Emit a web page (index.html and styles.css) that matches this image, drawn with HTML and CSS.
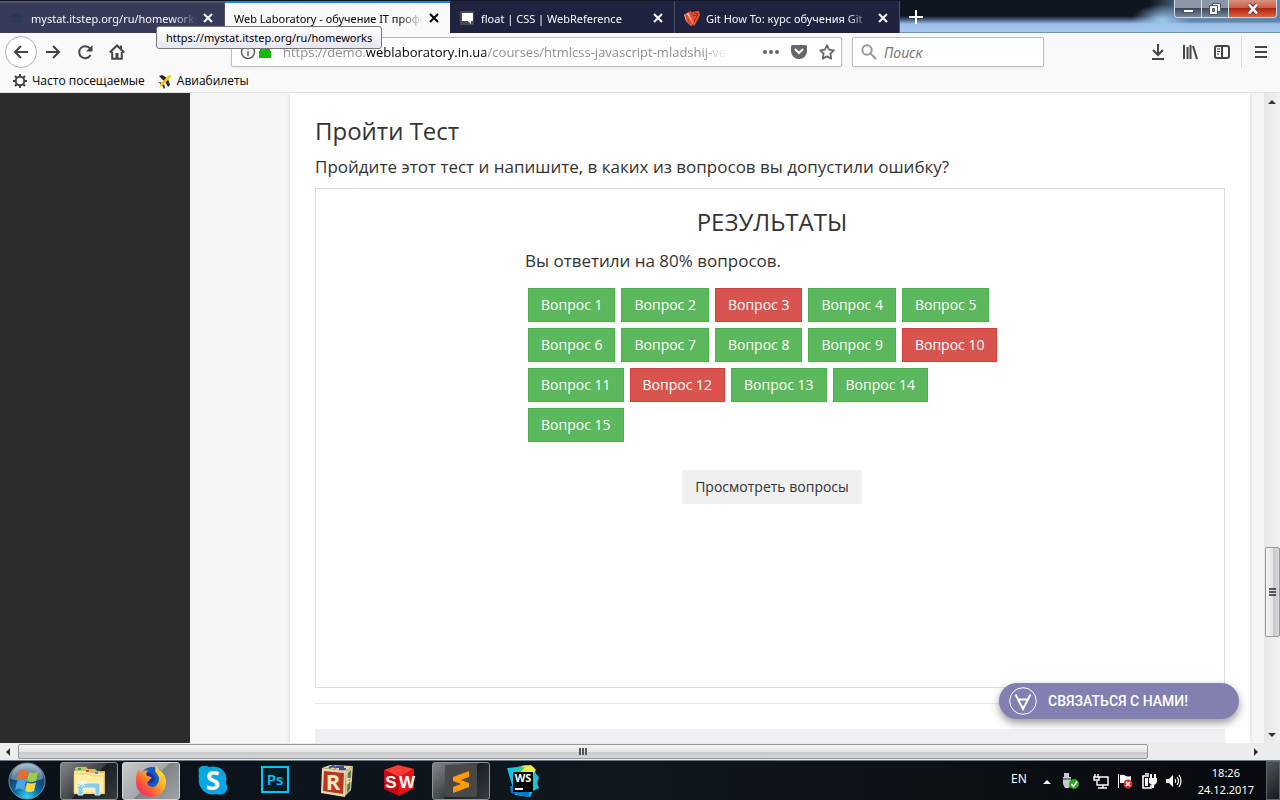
FILE: index.html
```html
<!DOCTYPE html>
<html lang="ru">
<head>
<meta charset="utf-8">
<title>Web Laboratory - обучение IT профессиям</title>
<link rel="stylesheet" href="styles.css">
</head>
<body>
<header class="browser">
  <div class="tabstrip">
    <div class="tab hovered">
      <svg class="fav" viewBox="0 0 16 16"><path fill="#25395a" d="M1 6l7-3 7 3-7 3zM4 8.5l4 2 4-2V12c-2 2-6 2-8 0zM1.500 7h1v5h-1z"/></svg>
      <span class="tab-title">mystat.itstep.org/ru/homeworks</span>
      <button class="close" aria-label="Закрыть вкладку"><svg viewBox="0 0 10 10"><path d="M1 1l8 8M9 1L1 9"/></svg></button>
    </div>
    <div class="tab active">
      <span class="tab-title">Web Laboratory - обучение IT профессиям</span>
      <button class="close" aria-label="Закрыть вкладку"><svg viewBox="0 0 10 10"><path d="M1 1l8 8M9 1L1 9"/></svg></button>
    </div>
    <div class="tab">
      <svg class="fav" viewBox="0 0 16 16"><rect x="1" y="1" width="14" height="14" rx="1" fill="#4b4b4b"/><path fill="#fff" d="M3 3h11v8h-2v3l-3-3H3z"/></svg>
      <span class="tab-title">float | CSS | WebReference</span>
      <button class="close" aria-label="Закрыть вкладку"><svg viewBox="0 0 10 10"><path d="M1 1l8 8M9 1L1 9"/></svg></button>
    </div>
    <div class="tab">
      <svg class="fav" viewBox="0 0 16 16"><path fill="#ffb9a4" d="M0 5l5-3 6 10-4 4-5-5z"/><path fill="#e5482b" d="M1 5l2-1 6 10-2 2-4-4z"/><path fill="#e5482b" d="M4 2l3-1 5 11-2 2z"/><path fill="#f0502c" d="M8 2l7-1 1 4-5 10-2 1 1-6z"/><path stroke="#8e2413" stroke-width=".9" fill="none" d="M10 3l4 1-4 8M9 5l4 1"/></svg>
      <span class="tab-title">Git How To: курс обучения Git</span>
      <button class="close" aria-label="Закрыть вкладку"><svg viewBox="0 0 10 10"><path d="M1 1l8 8M9 1L1 9"/></svg></button>
    </div>
    <button class="newtab" aria-label="Новая вкладка"><svg viewBox="0 0 14 14"><path d="M7 0v14M0 7h14"/></svg></button>
    <div class="caption">
      <button aria-label="Свернуть"><svg viewBox="0 0 16 12"><rect x="3.500" y="6.500" width="10" height="3" fill="#fff" stroke="#4d5563"/></svg></button>
      <button aria-label="Восстановить"><svg viewBox="0 0 16 12"><path fill="#fff" stroke="#4d5563" d="M5.500.500h8v8h-8z"/><path fill="#fff" stroke="#4d5563" d="M2.500 2.500h8v9h-8z"/><path fill="#7d8795" stroke="#4d5563" d="M5.500 5.500h2v3h-2z"/></svg></button>
      <button class="x" aria-label="Закрыть"><svg viewBox="0 0 16 12"><path stroke="#5a4550" stroke-width="4.500" d="M4 1.500l8 9M12 1.500l-8 9"/><path stroke="#fff" stroke-width="2.600" d="M4 1.500l8 9M12 1.500l-8 9"/></svg></button>
    </div>
  </div>

  <div class="toolbar">
    <button class="tool back" aria-label="Назад"><svg viewBox="0 0 16 16"><path d="M15 8H2M8 2L2 8l6 6"/></svg></button>
    <button class="tool" aria-label="Вперёд"><svg viewBox="0 0 16 16"><path d="M1 8h13M8 2l6 6-6 6"/></svg></button>
    <button class="tool" aria-label="Обновить"><svg viewBox="0 0 16 16"><path d="M13 4.500A6 6 0 1 0 13.500 11"/><path class="solid" d="M15.500 1v6.500H9z"/></svg></button>
    <button class="tool" aria-label="Домой"><svg viewBox="0 0 16 16"><path d="M.8 8.500L8 1.500l7.200 7M3.200 8v6.800h9.600V8"/><path class="solid" d="M6.500 9h3v6h-3zM11 1.500h2V6l-2-2z"/></svg></button>
    <div class="urlbar">
      <svg class="info" viewBox="0 0 16 16"><circle cx="8" cy="8" r="6.500"/><path d="M8 7v5M8 4v1.600"/></svg>
      <svg class="lock" viewBox="0 0 14 14"><path d="M1 6h1V4a3 3 0 0 1 10 0v2h1v7H1z"/></svg>
      <input class="url" type="text" aria-label="Адрес" value="https://demo.weblaboratory.in.ua/courses/htmlcss-javascript-mladshij-verstalshik">
      <button class="mini" aria-label="Действия"><svg viewBox="0 0 16 16"><circle cx="2" cy="8" r="2"/><circle cx="8" cy="8" r="2"/><circle cx="14" cy="8" r="2"/></svg></button>
      <button class="mini" aria-label="Pocket"><svg viewBox="0 0 16 16"><path d="M1.500 1h13Q16 1 16 2.500V7A8 8 0 0 1 0 7V2.500Q0 1 1.500 1z"/><path fill="none" stroke="#fff" stroke-width="2" stroke-linecap="round" d="M4.500 5.500L8 9l3.500-3.500"/></svg></button>
      <button class="mini" aria-label="Добавить закладку"><svg viewBox="0 0 16 16"><path fill="none" stroke="#666" stroke-width="1.800" stroke-linejoin="round" d="M8 1.300l2.100 4.400 4.700.6-3.400 3.400.8 4.900L8 12.300l-4.200 2.300.8-4.900L1.200 6.300l4.700-.6z"/></svg></button>
    </div>
    <div class="searchbar">
      <svg viewBox="0 0 16 16"><circle cx="6" cy="6" r="4.700"/><path d="M9.500 9.500L15 15"/></svg>
      <input type="text" placeholder="Поиск" aria-label="Поиск">
    </div>
    <div class="actions">
      <button class="tool" aria-label="Загрузки"><svg viewBox="0 0 16 16"><path d="M8 0v11M3 6l5 5 5-5M2 15h12"/></svg></button>
      <button class="tool" aria-label="Библиотека"><svg viewBox="0 0 16 16"><path d="M2 1v14M5.500 3v12M8.500 1v14M11 2l4 13"/></svg></button>
      <button class="tool" aria-label="Боковая панель"><svg viewBox="0 0 16 16"><rect x="1" y="2" width="14" height="12" rx="2"/><path d="M8 2v12"/><path class="thin" d="M3 5h3M3 7.500h3M3 10h2"/></svg></button>
      <button class="tool menu" aria-label="Меню"><svg viewBox="0 0 16 16"><path d="M2 3h12M2 8h12M2 13h12"/></svg></button>
    </div>
  </div>

  <nav class="bookmarks">
    <a href="#"><svg viewBox="0 0 16 16"><circle cx="8" cy="8" r="4.300" fill="none" stroke="#444" stroke-width="2"/><path stroke="#444" stroke-width="2" d="M8 1v3M8 12v3M1 8h3M12 8h3M3 3l2 2M11 11l2 2M13 3l-2 2M5 11l-2 2"/></svg>Часто посещаемые</a>
    <a href="#"><svg viewBox="0 0 16 16"><path fill="#222" d="M2 3l3-1 5 3-3 3zM11 6l2 6-2 2-3-6zM1 9l5 1-1 2zM5 12l2-1 1 4-1 1z"/><path fill="#f6c800" d="M11 3l3-1v2l-8 8-4 3 2-5z"/></svg>Авиабилеты</a>
  </nav>
  <div class="tooltip" role="tooltip">https://mystat.itstep.org/ru/homeworks</div>
</header>

<div class="viewport">
  <aside class="side"></aside>
  <div class="page">
    <main class="content">
      <h1>Пройти Тест</h1>
      <p>Пройдите этот тест и напишите, в каких из вопросов вы допустили ошибку?</p>
      <section class="quiz">
        <div class="results">
          <h2>РЕЗУЛЬТАТЫ</h2>
          <p>Вы ответили на 80% вопросов.</p>
          <div class="questions">
            <button>Вопрос 1</button><button>Вопрос 2</button><button class="wrong">Вопрос 3</button><button>Вопрос 4</button><button>Вопрос 5</button>
            <button>Вопрос 6</button><button>Вопрос 7</button><button>Вопрос 8</button><button>Вопрос 9</button><button class="wrong">Вопрос 10</button>
            <button>Вопрос 11</button><button class="wrong">Вопрос 12</button><button>Вопрос 13</button><button>Вопрос 14</button>
            <button>Вопрос 15</button>
          </div>
          <button class="review">Просмотреть вопросы</button>
        </div>
      </section>
      <hr>
      <div class="panel"></div>
    </main>
  </div>
  <div class="vscroll">
    <i class="arrow up"></i><div class="vthumb"><i></i><i></i><i></i></div><i class="arrow down"></i>
  </div>
  <button class="contact"><svg viewBox="0 0 28 28"><circle cx="14" cy="14" r="13.300"/><path class="a" d="M6.500 7.500L14 22l7.500-14.500M9 12.500h10"/></svg>СВЯЗАТЬСЯ С НАМИ!</button>
</div>
<div class="hscroll"><i class="arrow left"></i><div class="htrack"><div class="hthumb"><i></i><i></i><i></i></div></div><i class="arrow right"></i></div>

<footer class="taskbar">
  <button class="start" aria-label="Пуск">
    <svg viewBox="0 0 38 38"><defs><radialGradient id="orb" cx=".5" cy=".95" r=".9"><stop offset="0" stop-color="#35d5f5"/><stop offset=".4" stop-color="#0869a5"/><stop offset=".75" stop-color="#173f68"/><stop offset="1" stop-color="#8aa7bd"/></radialGradient></defs><circle cx="19" cy="19" r="18" fill="url(#orb)" stroke="#6c96ad"/><path fill="#c8d7e2" opacity=".45" d="M3 17a16 15 0 0 1 32 0q-16 5-32 0z"/><path fill="#ee6b2d" d="M11 9q4-3 9 0l-2 9q-4-3-9 0z"/><path fill="#9bcc43" d="M21 10q4 2 9 0l-2 9q-4 2-9 0z"/><path fill="#4aa6e3" d="M9 19.500q4-3 9 0l-2 8.500q-4-3-9 0z"/><path fill="#ffd43a" d="M19 20.500q4 2 9 0L26 29q-4 2-9 0z"/></svg>
  </button>
  <button class="task open" aria-label="Проводник">
    <svg viewBox="0 0 32 32"><path fill="#d9bc62" d="M2 3l2-1h9l2 2h7l2 2h8v23H1z"/><path fill="#f7e6a0" d="M1 6h14l2 2h14v21H1z"/><path fill="#ffef9f" stroke="#d6b85f" stroke-width=".6" d="M1 9h15l2 2h13v17H1z"/><path fill="#25a538" d="M5 3h3v2H5z"/><path fill="#d84b38" d="M13 5h3v2h-3z"/><path fill="#2f9be0" d="M22 7h3v2h-3z"/><path fill="#8bc9e8" stroke="#d6f2ff" d="M5 30V20q0-2 2-2h18q2 0 2 2v10h-5v-7H10v7z"/><path stroke="#fff" d="M9 13v9M5 18h9M6 15l6 6M12 15l-6 6"/></svg>
  </button>
  <button class="task open current" aria-label="Firefox">
    <svg viewBox="0 0 32 32"><defs><linearGradient id="fox" x1="1" y1="0" x2="0" y2="1"><stop offset="0" stop-color="#fff34a"/><stop offset=".4" stop-color="#ffae22"/><stop offset=".7" stop-color="#ff4f3d"/><stop offset="1" stop-color="#e31587"/></linearGradient></defs><circle cx="17" cy="14" r="12" fill="#1459c9"/><path fill="#173393" d="M11 7q7 0 9 7-1 5-7 4z"/><path fill="url(#fox)" d="M3 5q2 0 3 3 4-4 7-2-3 2-1 5 3 0 5 2-3 1-3 3-3 1-1 4 4 4 9 0 4-6 0-11-3-3-1-8 3 4 6 6 4 5 4 10A15 15 0 0 1 1 17Q1 10 3 5z"/></svg>
  </button>
  <button class="task" aria-label="Skype">
    <svg viewBox="0 0 32 32"><path fill="#08a6e2" d="M2 8Q0 3 5 1q4-1 7 1Q23 0 28 8q2 4 1 10 3 6-1 10-4 3-9 1-10 2-15-6-3-5-2-9-1-3 0-6z"/><text class="skype" x="16" y="25" text-anchor="middle">S</text></svg>
  </button>
  <button class="task" aria-label="Photoshop">
    <svg viewBox="0 0 32 32"><rect x="3" y="2" width="26" height="25" fill="#001d26" stroke="#00c8ff" stroke-width="2"/><text class="ps" x="16" y="20" text-anchor="middle">Ps</text></svg>
  </button>
  <button class="task" aria-label="R">
    <svg viewBox="0 0 32 32"><path fill="#e6d6a6" d="M1 3l8-3 23 1-7 5z"/><path stroke="#394b92" stroke-width="2" fill="none" d="M8 3l4-2 3 2M15 2h8M18 4h7"/><path fill="#d9c68e" d="M25 6l7-5-2 24-6 6z"/><path fill="#4c7b4b" d="M27 8l3-3-1 19-3 4z"/><path fill="#ead9aa" d="M1 3l24 3-1 26L0 28z"/><path fill="#b93528" d="M3 6l20 2-1 21L2 26z"/><text class="block" x="12" y="25" text-anchor="middle">R</text><text class="side-letter" x="28" y="19" text-anchor="middle">P</text></svg>
  </button>
  <button class="task" aria-label="SolidWorks">
    <svg viewBox="0 0 32 32"><path fill="#ff3b32" d="M1 5l14-5 16 4-15 8z"/><path fill="#c80b11" d="M1 5l15 7v19L1 24z"/><path fill="#e3161a" d="M31 4l-15 8v19l15-8z"/><text class="sw" x="8" y="23" text-anchor="middle">S</text><text class="sw" x="24" y="23" text-anchor="middle">W</text></svg>
  </button>
  <button class="task open" aria-label="Sublime Text">
    <svg viewBox="0 0 32 32"><rect width="32" height="32" rx="2" fill="#484848"/><path fill="#ff9b00" d="M8 12l16-6v6l-8 3 8 3v4L8 28v-6l8-3-8-3z"/></svg>
  </button>
  <button class="task" aria-label="WebStorm">
    <svg viewBox="0 0 32 32"><path fill="#16c4dc" d="M0 3l10-1 8-2 9 2 2 7 3 3-2 6 2 5-6 3-3 6-15-2z"/><path fill="#efe94a" d="M15 1l9-1 5 5-4 5-12-2z"/><path fill="#0878d8" d="M3 21h20l-1 11-18-4z"/><path fill="#25d49a" d="M8 3l10-1-8 9z"/><path fill="#000" d="M6 7h20v20H6z"/><text class="ws" x="16" y="17" text-anchor="middle">WS</text><path fill="#fff" d="M8 23h8v2H8z"/></svg>
  </button>
  <div class="tray">
    <span class="lang">EN</span>
    <svg viewBox="0 0 16 16"><path fill="#fff" d="M4 11l4-4 4 4z"/></svg>
    <svg class="usb" viewBox="0 0 16 16"><path fill="#c4c8cc" d="M1 0h5v4h2v7l-2 4H2l-2-4V4h1z"/><path fill="#777d82" d="M0 5h8v2H0z"/><circle cx="11" cy="11" r="5" fill="#2aa51e"/><path fill="none" stroke="#fff" stroke-width="1.600" d="M8.500 11l2 2.500L14 8.500"/></svg>
    <svg viewBox="0 0 16 16"><path fill="none" stroke="#fff" stroke-width="1.400" d="M6 4h9v8H4V8M10 12v3M5 15h9M2 1v3M5 1v3M1 4h5v3H1z"/></svg>
    <svg viewBox="0 0 16 16"><path fill="#fff" d="M1 1h1v14H1zM3 2q3-1 6 1 2 1 5 0v7H3z"/><circle cx="11" cy="11" r="4.500" fill="#e02a22"/><path stroke="#fff" stroke-width="1.700" d="M9 9l4 4M13 9l-4 4"/></svg>
    <svg viewBox="0 0 16 16"><path fill="none" stroke="#fff" stroke-width="1.600" d="M8 3H2v12h8v-3M4 1h4"/><path fill="#fff" d="M4 5h3v8H4zM8 5h8v4q-1 3-4 3T8 9zM9 1h2v4H9zM13 1h2v4h-2zM11 12h2v3h-2z"/></svg>
    <svg viewBox="0 0 16 16"><path fill="#fff" d="M1 6h3l4-4v12l-4-4H1z"/><path fill="none" stroke="#fff" stroke-width="1.200" d="M10 6q1.500 2 0 4M12 4q3 4 0 8M14 2q4 6 0 12"/></svg>
    <time>18:26<br>24.12.2017</time>
    <button class="desktop" aria-label="Свернуть все окна"></button>
  </div>
</footer>
</body>
</html>
```
FILE: styles.css
```css
* { box-sizing: border-box; }
body {
  margin: 0;
  height: 100vh;
  display: flex;
  flex-direction: column;
  overflow: hidden;
  font-family: "Open Sans", "Noto Sans", sans-serif;
  color: #333;
}
button { font: inherit; color: inherit; border: 0; padding: 0; background: none; flex: none; }
input { font: inherit; border: 0; padding: 0; min-width: 0; outline: 0; background: none; }
svg { display: block; flex: none; overflow: visible; }

.browser { position: relative; flex: none; background: #f9f9fa; font-family: "Noto Sans", sans-serif; font-size: 11px; color: #000; }
.tabstrip {
  display: flex;
  height: 33px;
  padding-top: 1px;
  border-bottom: 1px solid #6f93bd;
  background:
    radial-gradient(ellipse 30px 16px at 1162px 20px, #9cc9ee, transparent),
    linear-gradient(90deg, transparent 1150px, #5f87ad 1190px),
    linear-gradient(#10161f 0 16px, #4b6486 20px, #9dbfe8 24px, #a9cbf2 33px);
  background-size: auto, 100% 22px, auto;
  background-repeat: no-repeat;
}
.tab { display: flex; align-items: center; flex: 0 1 225px; min-width: 0; height: 32px; padding: 2px 11px 0 9px; gap: 6px; background: #202340; color: #f9f9fa; border-right: 1px solid #4d4f66; }
.tab.hovered { background: #383a59; border-top: 2px solid #55566f; padding-top: 0; }
.tab.active { background: #f9f9fa; color: #000; border-top: 2px solid #0a84ff; border-right: 0; padding-top: 0; }
.fav { width: 16px; height: 16px; }
.tab-title { flex: 1; overflow: hidden; white-space: nowrap; mask-image: linear-gradient(90deg, #000 calc(100% - 24px), transparent); }
.close svg { width: 10px; height: 10px; stroke: currentColor; stroke-width: 2; }
.newtab { width: 32px; display: grid; place-items: center; }
.newtab svg { width: 14px; height: 14px; stroke: #fff; stroke-width: 2; }
.caption { margin: -1px 3px 0 auto; display: flex; height: 18px; border: 1px solid #d5dce4; border-top: 0; border-radius: 0 0 4px 4px; overflow: hidden; flex: none; }
.caption button { width: 27px; display: grid; place-items: center; border-right: 1px solid #d5dce4; background: linear-gradient(#8b97a6 0 50%, #3d4a5c 50%, #76869b); }
.caption svg { width: 16px; height: 12px; }
.caption .x { width: 47px; border: 0; background: linear-gradient(#dc9080, #c75a44 50%, #b02410 50%, #e0603c); }

.toolbar { display: flex; align-items: center; height: 38px; padding: 0 1px 0 5px; }
.tool { width: 32px; height: 32px; display: grid; place-items: center; }
.tool svg { width: 16px; height: 16px; fill: none; stroke: #444; stroke-width: 2; }
.tool .solid { fill: #444; stroke: none; }
.tool .thin { stroke-width: 1; }
.tool.back { border: 1px solid #b1b1b3; border-radius: 50%; background: #fff; }
.urlbar, .searchbar { display: flex; align-items: center; height: 30px; border: 1px solid #bdbdbe; border-radius: 2px; background: #fff; box-shadow: 0 1px 3px #0001; }
.urlbar { flex: 1 1 611px; margin-left: 98px; padding: 0 0 0 8px; min-width: 0; }
.info { width: 16px; height: 16px; fill: none; stroke: #666; stroke-width: 1.5; margin-right: 2px; }
.lock { width: 14px; height: 14px; fill: #12bc00; margin-right: 11px; }
.url {
  flex: 1;
  font-family: "Open Sans", sans-serif;
  font-size: 13px;
  color: transparent;
  background: linear-gradient(90deg, #888 83px, #000 83px 203px, #888 203px 420px, transparent 444px);
  background-clip: text;
  -webkit-background-clip: text;
}
.mini { width: 28px; display: grid; place-items: center; }
.mini svg { width: 16px; height: 16px; fill: #666; }
.searchbar { flex: 0 1 192px; margin-left: 10px; padding: 0 8px; gap: 7px; min-width: 0; }
.searchbar svg { width: 16px; height: 16px; fill: none; stroke: #999; stroke-width: 2; }
.searchbar input { flex: 1; width: 100%; font-size: 14px; font-style: italic; }
.searchbar input::placeholder { color: #777; }
.actions { display: flex; margin-left: 98px; }
.tool.menu { width: 38px; border-left: 1px solid #dcdcdc; margin-left: 3px; }
.bookmarks { display: flex; align-items: center; gap: 12px; height: 22px; padding: 0 12px 2px; border-bottom: 1px solid #e0e0e1; font-family: "Open Sans", sans-serif; font-size: 12px; }
.bookmarks a { display: flex; align-items: center; gap: 4px; color: #000; text-decoration: none; }
.bookmarks svg { width: 16px; height: 16px; }
.tooltip { position: absolute; left: 156px; top: 26px; height: 23px; padding: 0 9px; line-height: 21px; border: 1px solid #767676; border-radius: 3px; background: linear-gradient(#fff, #e4e5f0); white-space: nowrap; }

.viewport { position: relative; flex: 1; min-height: 0; display: flex; overflow: hidden; }
.side { flex: 0 0 190px; background: #2c2c2c; }
.page { flex: 1; min-width: 0; padding: 0 14px 0 100px; background: #f6f6f6; overflow: hidden; }
.content { display: flex; flex-direction: column; min-height: 100%; padding: 22px 25px 0; background: #fff; box-shadow: 0 0 5px #0002; }
h1, h2 { margin: 0; font-size: 24px; line-height: 32px; font-weight: 400; }
p { margin: 8px 0; font-size: 17px; line-height: 24px; }
.quiz { min-height: 500px; border: 1px solid #ddd; padding: 17px 0 0 4px; }
.content > p { margin-bottom: 9px; }
.results { width: 494px; max-width: 100%; margin: 0 auto; display: flex; flex-direction: column; }
.results h2 { text-align: center; }
.results p { margin: 11px 0 12px; }
.questions { display: flex; flex-wrap: wrap; gap: 6px; padding: 3px; font-size: 14px; }
.questions button { padding: 6px 12px; line-height: 20px; color: #fff; background: #5cb85c; border: 1px solid #4cae4c; }
.questions .wrong { background: #d9534f; border-color: #d43f3a; }
.review { align-self: center; margin-top: 25px; padding: 7px 13px; font-size: 14px; line-height: 20px; background: #efefef; }
hr { width: 100%; margin: 15px 0 25px; border: 0; border-top: 1px solid #e7e7e7; }
.panel { flex: 1; min-height: 14px; background: #edf1f5; }
.contact {
  position: absolute; right: 41px; bottom: 24px; width: 240px; height: 36px;
  display: flex; align-items: center; gap: 11px; padding-left: 10px;
  border-radius: 18px; background: #8280b0; color: #fff;
  font: 500 14px Roboto, sans-serif; box-shadow: 0 4px 8px #0006;
}
.contact svg { width: 28px; height: 28px; fill: none; stroke: #fff; stroke-width: 1; }
.contact .a { stroke-width: 2; }

.vscroll { flex: 0 0 16px; display: flex; flex-direction: column; align-items: center; background: linear-gradient(90deg, #e6e6e6, #f2f2f2); padding: 7px 0 6px; }
.arrow { border: 4px solid transparent; flex: none; }
.up { border-top: 0; border-bottom-color: #333; }
.down { border-bottom: 0; border-top-color: #333; }
.left { border-left: 0; border-right-color: #333; }
.right { border-right: 0; border-left-color: #333; }
.vthumb { width: 15px; height: 90px; margin: auto 0 96px; border: 1px solid #979797; border-radius: 2px; background: linear-gradient(90deg, #f4f4f4, #e5e5e7 50%, #c6c6cb 51%, #d5d5da); display: flex; flex-direction: column; align-items: center; justify-content: center; gap: 1px; }
.vthumb i { width: 7px; height: 2px; background: #555; }
.hscroll { flex: 0 0 17px; display: flex; align-items: center; gap: 8px; padding: 0 22px 0 6px; background: #ececec; }
.htrack { flex: 1; }
.hthumb { width: 92%; height: 15px; border: 1px solid #979797; border-radius: 2px; background: linear-gradient(#f4f4f4, #e5e5e7 50%, #c6c6cb 51%, #d5d5da); display: flex; align-items: center; justify-content: center; gap: 1px; }
.hthumb i { width: 2px; height: 7px; background: #555; }

.taskbar { flex: 0 0 40px; display: flex; align-items: center; gap: 4px; padding-left: 8px; border-top: 1px solid #6b7b86; background: linear-gradient(90deg, #0a1119, #10171d 50%, #070a0e); color: #fff; }
.start { width: 48px; }
.start svg { width: 38px; height: 38px; }
.task { width: 58px; height: 38px; display: grid; place-items: center; border: 1px solid transparent; border-radius: 3px; }
.task svg { width: 32px; height: 32px; }
.task.open { border-color: #8d9296; background: linear-gradient(135deg, #84878a, #3b3f43 50%, #1b1f23 51%, #353a3e); }
.task.current { border-color: #d4d6d8; background: linear-gradient(135deg, #c9cbcc, #a3a6a8 50%, #7f8385 51%, #a0a3a5); }
.skype { font: 700 26px "Open Sans", sans-serif; fill: #fff; }
.ps { font: 600 15px "Open Sans", sans-serif; fill: #00c8ff; }
.block { font: 700 22px "Open Sans", sans-serif; fill: #f4e7bd; }
.side-letter { font: 700 9px "Open Sans", sans-serif; fill: #f4e7bd; }
.sw { font: 700 17px "Liberation Sans", sans-serif; fill: #fff; }
.ws { font: 700 11px "Open Sans", sans-serif; fill: #fff; }
.tray { margin-left: auto; height: 100%; display: flex; align-items: center; gap: 8px; font: 12px/17px "Noto Sans", sans-serif; }
.tray svg { width: 16px; height: 16px; }
.tray .lang { margin: 0 4px 4px 0; }
.tray .usb { margin-right: 6px; }
.tray time { margin-left: 9px; font-size: 11px; text-align: center; }
.desktop { align-self: stretch; width: 14px; margin-left: 4px; border: 1px solid #5d656c; background: linear-gradient(135deg, #50565b, #15191d); }
```
